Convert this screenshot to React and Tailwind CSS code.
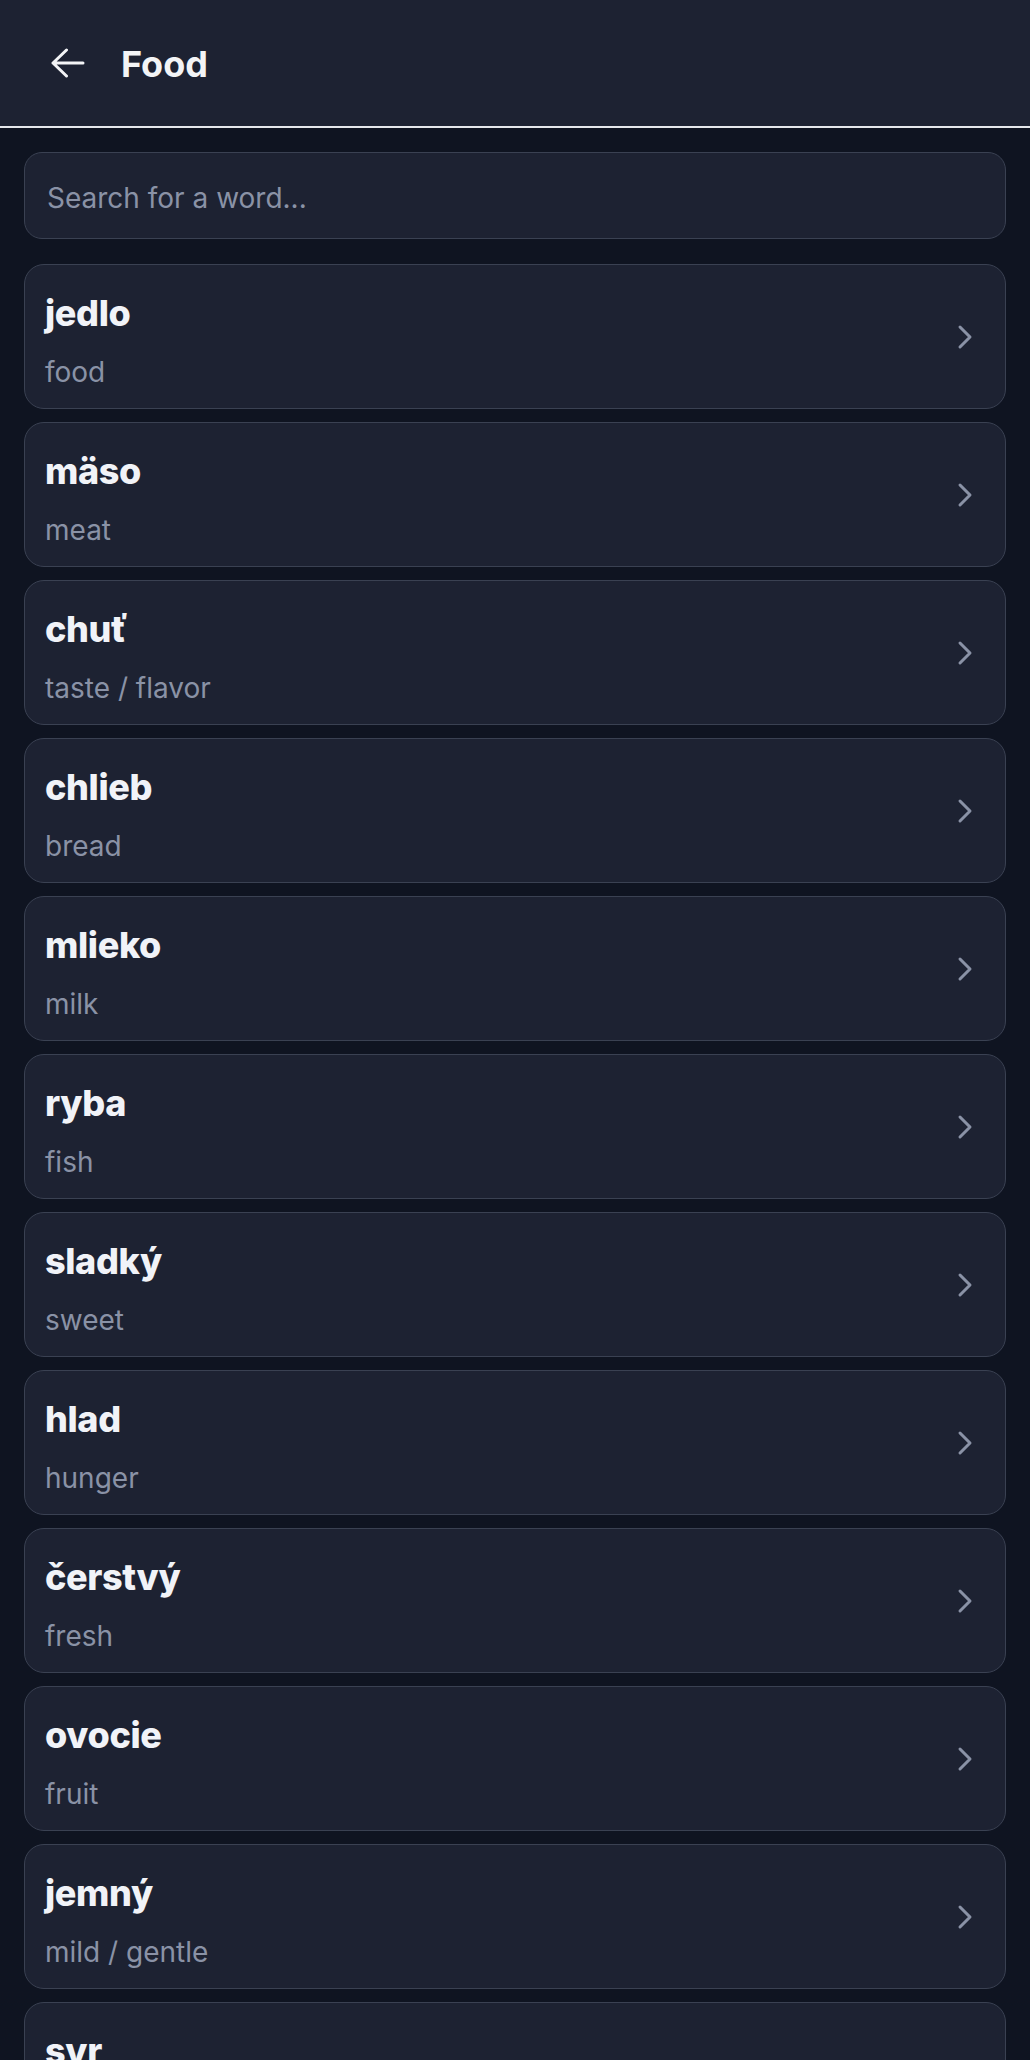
import React from "react";
import { ChevronRight } from "lucide-react";

const words = [
  ["jedlo", "food"],
  ["mäso", "meat"],
  ["chuť", "taste / flavor"],
  ["chlieb", "bread"],
  ["mlieko", "milk"],
  ["ryba", "fish"],
  ["sladký", "sweet"],
  ["hlad", "hunger"],
  ["čerstvý", "fresh"],
  ["ovocie", "fruit"],
  ["jemný", "mild / gentle"],
  ["syr", "cheese"],
  ["zelenina", "vegetables"],
];

function BackArrow() {
  return (
    <svg width="34" height="30" viewBox="0 0 34 30" fill="none" className="block">
      <path
        d="M15.5 2 L2 15 L15.5 28 M2 15 H32"
        stroke="#f3f4f6"
        strokeWidth="3"
        strokeLinecap="round"
        strokeLinejoin="round"
      />
    </svg>
  );
}

export default function App() {
  return (
    <div
      className="h-[2060px] w-full overflow-hidden bg-[#0f1421]"
      style={{ fontFamily: "Inter, 'Noto Sans', sans-serif" }}
    >
      <header className="flex h-[128px] items-center border-b-2 border-[#e5e7eb] bg-[#1d2232] pl-[51px]">
        <BackArrow />
        <h1 className="ml-[36px] mt-[2px] text-[36px] font-bold leading-none text-[#f3f4f6]">
          Food
        </h1>
      </header>

      <main className="px-6 pt-6">
        <div className="flex h-[87px] items-center rounded-[18px] border border-[#3a4152] bg-[#1d2232] px-[22px] pt-[4px]">
          <span className="text-[28px] leading-none text-[#8a92a6]">
            Search for a word...
          </span>
        </div>

        <ul className="mt-[25px] flex flex-col gap-[13px]">
          {words.map(([w, t]) => (
            <li
              key={w}
              className="flex h-[145px] items-center justify-between rounded-[20px] border border-[#3a4152] bg-[#1d2232] pl-[20px] pr-[20px]"
            >
              <div className="flex flex-col pt-[10px]">
                <span className="text-[36px] font-extrabold leading-[40px] tracking-[-0.01em] text-[#f1f3f8]">
                  {w}
                </span>
                <span className="mt-[21px] text-[28px] leading-[36px] text-[#8a92a6]">
                  {t}
                </span>
              </div>
              <ChevronRight size={40} strokeWidth={1.8} color="#8a92a6" />
            </li>
          ))}
        </ul>
      </main>
    </div>
  );
}
